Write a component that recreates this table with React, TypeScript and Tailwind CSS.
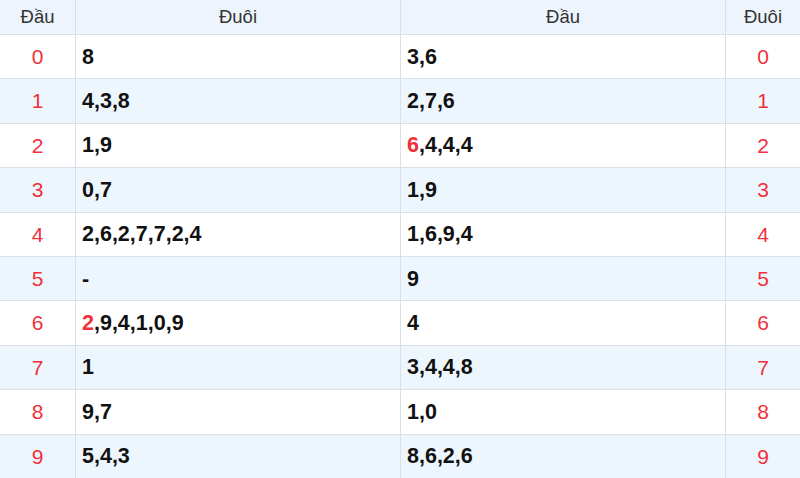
import React from "react";

const rows: { d: string; left: React.ReactNode; right: React.ReactNode }[] = [
  { d: "0", left: "8", right: "3,6" },
  { d: "1", left: "4,3,8", right: "2,7,6" },
  { d: "2", left: "1,9", right: (<><span className="text-[#f0303a]">6</span>,4,4,4</>) },
  { d: "3", left: "0,7", right: "1,9" },
  { d: "4", left: "2,6,2,7,7,2,4", right: "1,6,9,4" },
  { d: "5", left: "-", right: "9" },
  { d: "6", left: (<><span className="text-[#f0303a]">2</span>,9,4,1,0,9</>), right: "4" },
  { d: "7", left: "1", right: "3,4,4,8" },
  { d: "8", left: "9,7", right: "1,0" },
  { d: "9", left: "5,4,3", right: "8,6,2,6" },
];

export default function App() {
  return (
    <div
      className="w-[800px] h-[478px] flex flex-col bg-white overflow-hidden"
      style={{ fontFamily: '"Liberation Sans", Arial, sans-serif' }}
    >
      <div className="grid grid-cols-[76px_325px_325px_1fr] h-[35px] bg-[#edf4fc] border-b border-[#dae0e7] text-[18.5px] text-[#333]">
        <div className="flex items-center justify-center border-r border-[#dae0e7]">Đầu</div>
        <div className="flex items-center justify-center border-r border-[#dae0e7]">Đuôi</div>
        <div className="flex items-center justify-center border-r border-[#dae0e7]">Đầu</div>
        <div className="flex items-center justify-center">Đuôi</div>
      </div>
      {rows.map((r, i) => (
        <div
          key={r.d}
          className={`flex-1 grid grid-cols-[76px_325px_325px_1fr] ${i < 9 ? "border-b border-[#dae0e7]" : ""} ${i % 2 === 1 ? "bg-[#eef6fd]" : "bg-white"}`}
        >
          <div className="flex items-center justify-center border-r border-[#dae0e7] text-[21px] text-[#f0303a]">{r.d}</div>
          <div className="flex items-center pl-[6px] border-r border-[#dae0e7] text-[21.5px] font-bold text-[#111]">{r.left}</div>
          <div className="flex items-center pl-[6px] border-r border-[#dae0e7] text-[21.5px] font-bold text-[#111]">{r.right}</div>
          <div className="flex items-center justify-center text-[21px] text-[#f0303a]">{r.d}</div>
        </div>
      ))}
    </div>
  );
}
